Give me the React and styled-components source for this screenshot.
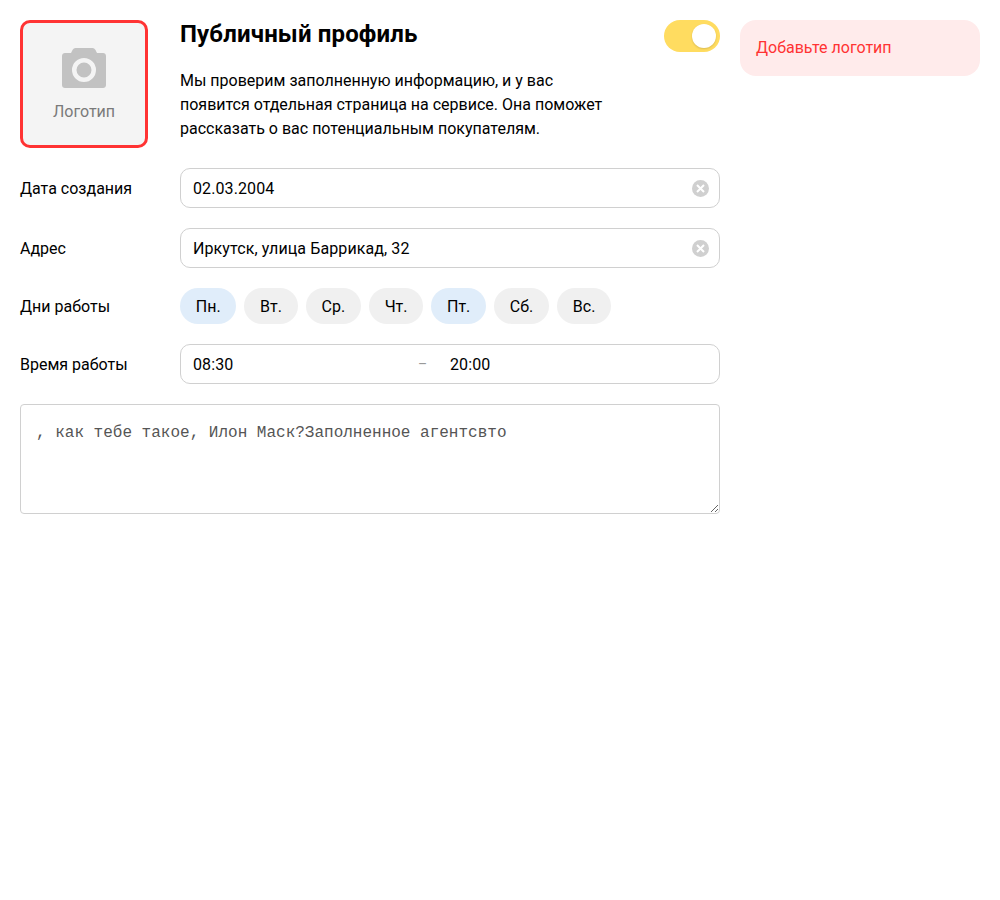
import React from "react"
import styled, { createGlobalStyle } from "styled-components"

const Global = createGlobalStyle`
    body {
        margin: 0;
        background: #fff;
        font-family: Roboto, "Liberation Sans", sans-serif;
        font-size: 16px;
        color: #000;
    }
`
const Page = styled.div`
    display: flex;
    align-items: flex-start;
    gap: 20px;
    padding: 20px;
`
const Form = styled.div`
    width: 700px;
    display: flex;
    flex-direction: column;
    gap: 20px;
`
const Head = styled.div`
    display: flex;
    align-items: flex-start;
`
const Logo = styled.div`
    width: 128px;
    height: 128px;
    box-sizing: border-box;
    margin-right: 32px;
    flex: none;
    display: flex;
    flex-direction: column;
    align-items: center;
    padding-top: 25px;
    background: #f4f4f4;
    border: 3px solid #ff3333;
    border-radius: 10px;
    color: #7a7a7a;
    line-height: 24px;
    svg {
        display: block;
        margin-bottom: 12px;
    }
`
const Intro = styled.div`
    flex: 1;
`
const TitleRow = styled.div`
    display: flex;
    justify-content: space-between;
    align-items: flex-start;
    margin-bottom: 17px;
`
const Title = styled.h1`
    margin: 0;
    font-size: 24px;
    line-height: 28px;
    font-weight: 700;
    letter-spacing: 0.15px;
`
const Toggle = styled.div`
    width: 56px;
    height: 32px;
    box-sizing: border-box;
    padding: 4px;
    display: flex;
    justify-content: flex-end;
    background: #ffdc60;
    border-radius: 16px;
`
const Knob = styled.div`
    width: 24px;
    height: 24px;
    border-radius: 50%;
    background: #fff;
    box-shadow: 0 1px 2px rgba(0, 0, 0, 0.15);
`
const Text = styled.p`
    margin: 0;
    width: 430px;
    line-height: 24px;
`
const Row = styled.div`
    display: flex;
    align-items: center;
`
const Label = styled.div`
    width: 160px;
    flex: none;
    padding-top: 1px;
    line-height: 24px;
`
const Field = styled.div`
    flex: 1;
    height: 40px;
    box-sizing: border-box;
    display: flex;
    align-items: center;
    padding: 0 10px 0 12px;
    background: #fff;
    border: 1px solid #d0d0d0;
    border-radius: 10px;
`
const Input = styled.input`
    flex: ${props => props.$wide ? 1 : "none"};
    width: ${props => props.$wide ? "auto" : "220px"};
    min-width: 0;
    padding: 1px 0 0;
    border: 0;
    outline: 0;
    background: none;
    font: 16px/24px Roboto, "Liberation Sans", sans-serif;
    letter-spacing: 0.1px;
    color: #000;
`
const Dash = styled.span`
    width: 30px;
    margin-left: 5px;
    margin-right: 2px;
    flex: none;
    color: #999;
    font-size: 14px;
`
const Days = styled.div`
    display: flex;
    gap: 8px;
`
const Day = styled.div`
    height: 36px;
    padding: 0 15.75px;
    display: flex;
    align-items: center;
    border-radius: 18px;
    background: ${props => props.$active ? "#e0edfa" : "#f0f0f0"};
`
const Note = styled.textarea`
    display: block;
    box-sizing: border-box;
    width: 700px;
    height: 110px;
    padding: 18px 15px 16px;
    border: 1px solid #d0d0d0;
    border-radius: 4px;
    outline: 0;
    font: 16px/20px "Liberation Mono", monospace;
    color: #555;
`
const Alert = styled.div`
    width: 240px;
    height: 56px;
    box-sizing: border-box;
    display: flex;
    align-items: center;
    padding: 0 16px 1px;
    background: #ffebeb;
    border-radius: 16px;
    color: #ff3333;
`

const Camera = () => (
    <svg width="44" height="40" viewBox="0 0 44 40">
        <path
            fill="#c2c2c2"
            fillRule="evenodd"
            d="M10.500 2C11.300 .7 12.300 0 13.500 0H30.500C31.700 0 32.700 .7 33.500 2L35 5H41C42.700 5 44 6.300 44 8V37C44 38.700 42.700 40 41 40H3C1.300 40 0 38.700 0 37V8C0 6.300 1.300 5 3 5H9ZM22 10A12 12 0 1 0 22 34A12 12 0 1 0 22 10ZM22 14.500A7.500 7.500 0 1 1 22 29.500A7.500 7.500 0 1 1 22 14.500Z"
        />
    </svg>
)

const Clear = () => (
    <svg width="17" height="17" viewBox="0 0 17 17">
        <circle cx="8.500" cy="8.500" r="8.500" fill="#d0d0d0" />
        <path d="M5 5l7 7M12 5l-7 7" stroke="#fff" strokeWidth="2" />
    </svg>
)

const days = [
    { name: "Пн.", active: true },
    { name: "Вт." },
    { name: "Ср." },
    { name: "Чт." },
    { name: "Пт.", active: true },
    { name: "Сб." },
    { name: "Вс." },
]

export default function App() {
    return (
        <Page>
            <Global />
            <Form>
                <Head>
                    <Logo>
                        <Camera />
                        Логотип
                    </Logo>
                    <Intro>
                        <TitleRow>
                            <Title>Публичный профиль</Title>
                            <Toggle><Knob /></Toggle>
                        </TitleRow>
                        <Text>
                            Мы проверим заполненную информацию, и у вас появится отдельная страница на сервисе. Она поможет рассказать о вас потенциальным покупателям.
                        </Text>
                    </Intro>
                </Head>
                <Row>
                    <Label>Дата создания</Label>
                    <Field>
                        <Input $wide readOnly value="02.03.2004" />
                        <Clear />
                    </Field>
                </Row>
                <Row>
                    <Label>Адрес</Label>
                    <Field>
                        <Input $wide readOnly value="Иркутск, улица Баррикад, 32" />
                        <Clear />
                    </Field>
                </Row>
                <Row>
                    <Label>Дни работы</Label>
                    <Days>
                        {days.map(d => <Day key={d.name} $active={d.active}>{d.name}</Day>)}
                    </Days>
                </Row>
                <Row>
                    <Label>Время работы</Label>
                    <Field>
                        <Input readOnly value="08:30" />
                        <Dash>–</Dash>
                        <Input readOnly value="20:00" />
                    </Field>
                </Row>
                <Note readOnly value=", как тебе такое, Илон Маск?Заполненное агентсвто" />
            </Form>
            <Alert>Добавьте логотип</Alert>
        </Page>
    )
}
